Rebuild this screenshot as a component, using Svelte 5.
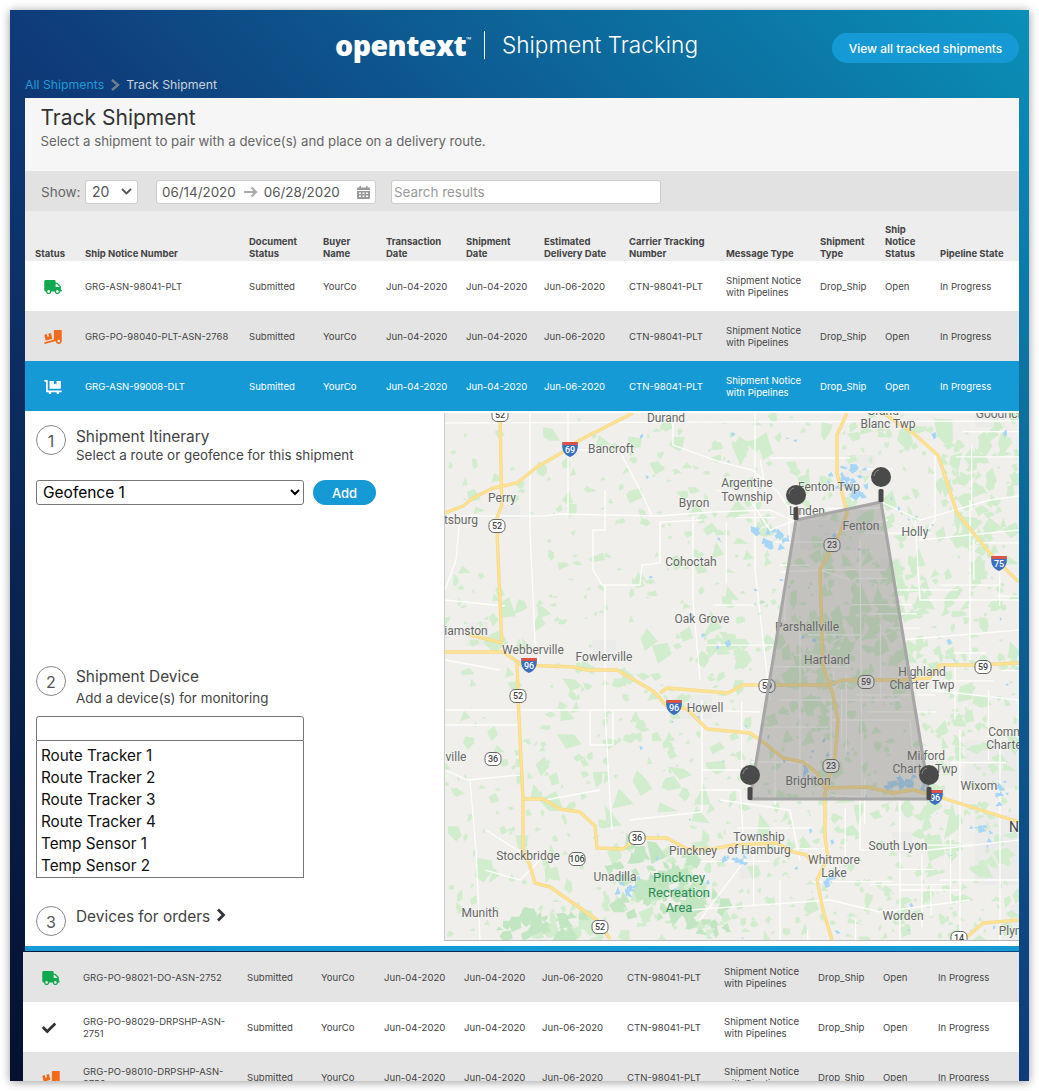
<script>
	const truck = 'M624 352h-16V243.9c0-12.7-5.1-24.9-14.1-33.9L494 110.1c-9-9-21.2-14.1-33.9-14.1H416V48c0-26.5-21.5-48-48-48H48C21.5 0 0 21.5 0 48v320c0 26.5 21.5 48 48 48h16c0 53 43 96 96 96s96-43 96-96h128c0 53 43 96 96 96s96-43 96-96h48c8.8 0 16-7.2 16-16v-32c0-8.8-7.2-16-16-16zM160 464c-26.5 0-48-21.5-48-48s21.5-48 48-48 48 21.5 48 48-21.5 48-48 48zm320 0c-26.5 0-48-21.5-48-48s21.5-48 48-48 48 21.5 48 48-21.5 48-48 48zm80-208H416V144h44.1l99.9 99.9V256z';
	const loading = 'M50.2 375.6c2.3 8.5 11.1 13.6 19.6 11.3l216.4-58c8.5-2.3 13.6-11.1 11.3-19.6l-49.7-185.5c-2.3-8.5-11.1-13.6-19.6-11.3L151 133.3l24.8 92.7-61.8 16.5-24.8-92.7-77.3 20.7C3.4 172.8-1.7 181.6.6 190.1l49.6 185.5zM384 0c-17.7 0-32 14.3-32 32v323.6L5.9 450c-4.3 1.2-6.8 5.6-5.6 9.8l12.6 46.3c1.2 4.3 5.6 6.8 9.8 5.6l393.7-107.4C418.8 464.1 467.6 512 528 512c61.9 0 112-50.1 112-112V0H384zm144 448c-26.5 0-48-21.5-48-48s21.5-48 48-48 48 21.5 48 48-21.5 48-48 48z';
	const dolly = 'M208 320h384c8.8 0 16-7.2 16-16V48c0-8.8-7.2-16-16-16H448v128l-48-32-48 32V32H208c-8.8 0-16 7.2-16 16v256c0 8.8 7.2 16 16 16zm416 64H128V16c0-8.8-7.2-16-16-16H16C7.2 0 0 7.2 0 16v32c0 8.8 7.2 16 16 16h48v368c0 8.8 7.2 16 16 16h82.9c-1.8 5-2.9 10.4-2.9 16 0 26.5 21.5 48 48 48s48-21.5 48-48c0-5.6-1.2-11-2.9-16H451c-1.8 5-2.9 10.4-2.9 16 0 26.5 21.5 48 48 48s48-21.5 48-48c0-5.6-1.2-11-2.9-16H624c8.8 0 16-7.2 16-16v-32c0-8.8-7.2-16-16-16z';
	const check = 'M173.898 439.404l-166.4-166.4c-9.997-9.997-9.997-26.206 0-36.204l36.203-36.204c9.997-9.998 26.207-9.998 36.204 0L192 312.69 432.095 72.596c9.997-9.997 26.207-9.997 36.204 0l36.203 36.204c9.997 9.997 9.997 26.206 0 36.204l-294.4 294.401c-9.998 9.997-26.207 9.997-36.204-.001z';

	const columns = [60, 164, 74, 63, 80, 78, 85, 97, 94, 65, 55, 79];
	const shiftedColumns = [60, 164, 74, 63, 80, 78, 85, 97, 94, 65, 55, 81];
	const headers = ['Status', 'Ship Notice Number', 'Document\nStatus', 'Buyer\nName', 'Transaction\nDate', 'Shipment\nDate', 'Estimated\nDelivery Date', 'Carrier Tracking\nNumber', 'Message Type', 'Shipment\nType', 'Ship\nNotice\nStatus', 'Pipeline State'];

	const topRows = [
		{ id: 'GRG-ASN-98041-PLT', icon: 'truck', tone: 'plain' },
		{ id: 'GRG-PO-98040-PLT-ASN-2768', icon: 'loading', tone: 'shade' },
		{ id: 'GRG-ASN-99008-DLT', icon: 'dolly', tone: 'selected' },
	];
	const bottomRows = [
		{ id: 'GRG-PO-98021-DO-ASN-2752', icon: 'truck', tone: 'shade' },
		{ id: 'GRG-PO-98029-DRPSHP-ASN-2751', icon: 'check', tone: 'plain' },
		{ id: 'GRG-PO-98010-DRPSHP-ASN-2750', icon: 'loading', tone: 'shade' },
	];
	const icons = {
		truck: { d: truck, box: '0 0 640 512', w: 18, cls: 'green' },
		loading: { d: loading, box: '0 0 640 512', w: 18, cls: 'orange' },
		dolly: { d: dolly, box: '0 0 640 512', w: 18, cls: 'white' },
		check: { d: check, box: '0 0 512 512', w: 14, cls: 'dark' },
	};

	const devices = ['Route Tracker 1', 'Route Tracker 2', 'Route Tracker 3', 'Route Tracker 4', 'Temp Sensor 1', 'Temp Sensor 2'];

	// map scenery, in page coordinates (the svg viewBox starts at 445,413)
	function seeded(seed) {
		return () => {
			seed = (seed + 0x6d2b79f5) | 0;
			let t = Math.imul(seed ^ (seed >>> 15), 1 | seed);
			t = (t + Math.imul(t ^ (t >>> 7), 61 | t)) ^ t;
			return ((t ^ (t >>> 14)) >>> 0) / 4294967296;
		};
	}
	const rnd = seeded(11);
	const blob = (cx, cy, r, n) => {
		const pts = [];
		const stretch = 0.5 + rnd();
		for (let i = 0; i < n; i++) {
			const a = (i / n) * Math.PI * 2 + rnd() * 0.7;
			const rr = r * (0.4 + rnd() * 0.8);
			pts.push(`${(cx + Math.cos(a) * rr).toFixed(1)},${(cy + Math.sin(a) * rr * stretch).toFixed(1)}`);
		}
		return pts.join(' ');
	};
	const scatter = (list, cx, cy, rx, ry, count, rmin, rmax) => {
		for (let i = 0; i < count; i++) {
			const x = cx + (rnd() - rnd()) * rx;
			const y = cy + (rnd() - rnd()) * ry;
			list.push(blob(x, y, rmin + rnd() * (rmax - rmin), 3 + Math.floor(rnd() * 3)));
		}
	};

	const greens = [];
	for (let i = 0; i < 2200; i++) {
		const x = 445 + rnd() * 574;
		const y = 413 + rnd() * 527;
		const weight = 0.16 + ((x - 445) / 574) * 0.62 + ((y - 413) / 527) * 0.22;
		if (rnd() > weight) continue;
		greens.push(blob(x, y, 2.5 + rnd() * rnd() * 12, 3 + Math.floor(rnd() * 3)));
	}
	scatter(greens, 980, 480, 40, 40, 30, 4, 10);
	scatter(greens, 910, 600, 70, 60, 50, 4, 11);
	scatter(greens, 830, 640, 50, 110, 70, 4, 11);

	const parks = [];
	scatter(parks, 655, 885, 50, 45, 70, 4, 11);
	scatter(parks, 545, 925, 50, 18, 26, 4, 10);
	scatter(parks, 700, 915, 40, 25, 20, 3, 8);
	scatter(parks, 760, 610, 10, 10, 3, 2, 4);

	const lakes = [];
	for (let i = 0; i < 80; i++) {
		lakes.push(blob(640 + rnd() * 379, 420 + rnd() * 520, 1 + rnd() * 2.5, 4));
	}
	scatter(lakes, 852, 482, 14, 20, 26, 2, 6);
	scatter(lakes, 772, 538, 20, 12, 14, 2, 6);
	scatter(lakes, 905, 783, 22, 9, 16, 2, 6);
	scatter(lakes, 805, 778, 10, 14, 8, 1.5, 4);
	scatter(lakes, 740, 858, 20, 10, 12, 2, 5);
	scatter(lakes, 628, 890, 16, 16, 10, 2, 5);
	scatter(lakes, 1000, 795, 16, 16, 8, 2, 5);
	scatter(lakes, 980, 830, 16, 14, 8, 2, 4);
	scatter(lakes, 830, 880, 8, 8, 5, 2, 5);

	const towns = [
		[845, 455, 30, 22], [800, 520, 60, 30], [672, 695, 40, 24], [500, 505, 20, 14], [466, 622, 22, 24],
		[592, 640, 24, 18], [880, 558, 22, 16], [965, 740, 54, 48], [975, 815, 44, 70], [740, 865, 20, 14],
		[892, 832, 20, 22], [1010, 905, 9, 32], [975, 415, 30, 12],
	];
	const white = [
		'445,423 1019,421',
		'445,516 545,516 560,514 660,516 712,512 770,510 800,524',
		'445,710 690,710 760,712',
		'445,725 520,725',
		'590,710 590,745 613,745 613,710',
		'530,413 530,530 535,640 540,668',
		'568,413 568,516',
		'605,490 605,530 593,530 593,570 602,585 640,585 642,565 660,563 660,522 702,520',
		'605,585 605,710 610,800 612,830',
		'445,600 505,606',
		'460,516 456,560 445,590',
		'445,770 468,780 520,775',
		'470,780 476,850 480,940',
		'486,830 520,852',
		'570,449 620,452 640,490 652,516',
		'630,820 702,812 702,770 740,770',
		'702,700 702,770',
		'673,423 673,445 720,462 752,470 778,492 796,520',
		'755,413 755,570 770,700',
		'693,516 693,600 700,680',
		'796,520 770,530 750,500 716,490',
		'881,502 920,520 990,500 1019,496',
		'770,458 850,458',
		'760,460 768,500',
		'935,455 935,520 920,540 1019,530',
		'915,520 920,600 1019,600',
		'970,500 970,660',
		'900,640 1019,630',
		'930,690 1019,700 1019,720',
		'960,730 960,940',
		'830,795 900,800 900,940',
		'860,800 860,850 930,850 1019,840',
		'940,880 1019,880',
		'900,890 960,890 960,900',
		'720,800 790,810 800,860',
		'700,790 740,790 745,860 700,920',
		'690,910 830,900 880,912 970,900',
		'780,880 780,940',
		'836,532 888,520',
		'780,572 820,570 850,580',
		'860,540 862,800',
		'800,620 800,780',
		'780,700 900,700',
		'830,720 910,720 915,780',
		'1000,740 1000,940',
		'445,660 500,670',
		'545,800 600,790',
		'485,870 520,880 540,860',
	];
	for (let i = 0; i < 60; i++) {
		const x = 700 + rnd() * 319;
		const y = 430 + rnd() * 500;
		const len = 25 + rnd() * 55;
		white.push(rnd() > 0.5 ? `${x},${y} ${x + len},${y}` : `${x},${y} ${x},${y + len}`);
	}
	const roads = [
		'500,413 501.7,505 497,518 497,532 501.7,640',
		'445,513 463,506 473,498 493,488 517,483 537,467 563,452 580,440 633,413',
		'445,652 503,652 522,665 573,667 587,670 617,670 653,691 667,706 687,709 707,729 750,733 767,745 783,758 803,762 817,773 825,788 867,787 893,793 913,790 933,795 1019,822',
		'847,413 837,435 837,473 847,513 840,533 820,570 823,667 832,690 838,720 835,757 825,793 825,837 828,857 817,880 823,910 832,940',
		'883,413 913,433 938,455 957,513 993,557 1019,582',
		'660,693 667,688 728,693 743,685 827,685 843,680 900,680 930,678 940,665 975,665 1019,663',
		'517,660 518,697 523,799 523,849 530,866 535,883 550,887 573,903 597,920 610,939',
		'470,635 503,643',
		'523,799 543,799 560,809 580,812 595,826 597,848 623,849 637,838 667,838 687,849 712,849 733,845 777,843 793,852 807,855 812,863',
		'967,937 983,923 1019,920',
	];
	const labels = [
		['Durand', 666, 418], ['Bancroft', 611, 449], ['Perry', 502, 498], ['tsburg', 461, 520], ['Byron', 694, 503],
		['Cohoctah', 691, 562], ['Oak Grove', 702, 619], ['iamston', 466, 631], ['Webberville', 533, 650], ['Fowlerville', 604, 657],
		['Howell', 705, 708], ['ville', 456, 757], ['Stockbridge', 528, 856], ['Unadilla', 615, 877], ['Pinckney', 693, 851], ['Munith', 480, 913],
		['Argentine', 747, 483], ['Township', 747, 497], ['Fenton Twp', 829, 487], ['Linden', 807, 511], ['Fenton', 861, 526], ['Holly', 915, 532],
		['Grand', 883, 411], ['Blanc Twp', 888, 424], ['Goodrich', 1000, 414], ['Parshallville', 807, 627], ['Hartland', 827, 660],
		['Highland', 922, 672], ['Charter Twp', 922, 685], ['Brighton', 808, 781], ['Milford', 926, 756], ['Charter Twp', 925, 769],
		['Wixom', 979, 786], ['Comm', 1006, 732], ['Charter', 1006, 745], ['Township', 759, 837], ['of Hamburg', 759, 850],
		['Whitmore', 834, 860], ['Lake', 834, 873], ['South Lyon', 898, 846], ['Worden', 903, 916], ['Plym', 1012, 931],
	];
	const shields = [
		['52', 500, 415], ['52', 497, 526], ['52', 518, 696], ['52', 600, 927], ['36', 493, 759], ['36', 637, 838], ['106', 577, 859],
		['23', 832, 545], ['23', 831, 766], ['59', 767, 686], ['59', 866, 682], ['59', 983, 667], ['14', 959, 938],
	];
	const interstates = [['69', 570, 449], ['96', 529, 665], ['96', 674, 707], ['75', 999, 563], ['96', 935, 797]];
	const pins = [[796, 495], [881, 477], [750, 775], [929, 775]];
</script>

{#snippet table(rows, cols)}
	<table class="grid">
		<colgroup>
			{#each cols as w}
				<col style="width: {w}px" />
			{/each}
		</colgroup>
		<tbody>
			{#each rows as row}
				<tr class={row.tone}>
					<td class="status">
						<svg class={icons[row.icon].cls} width={icons[row.icon].w} height="14" viewBox={icons[row.icon].box}><path d={icons[row.icon].d} /></svg>
					</td>
					<td class="ident">{row.id}</td>
					<td>Submitted</td>
					<td>YourCo</td>
					<td>Jun-04-2020</td>
					<td>Jun-04-2020</td>
					<td>Jun-06-2020</td>
					<td>CTN-98041-PLT</td>
					<td>Shipment Notice with Pipelines</td>
					<td>Drop_Ship</td>
					<td>Open</td>
					<td>In Progress</td>
				</tr>
			{/each}
		</tbody>
	</table>
{/snippet}

<div class="window">
	<header class="top">
		<div class="brand">
			<span class="logo">opentext<sup>™</sup></span>
			<span class="rule"></span>
			<span class="product">Shipment Tracking</span>
		</div>
		<button class="pill view-all">View all tracked shipments</button>
	</header>

	<nav class="crumbs">
		<a href="#all">All Shipments</a>
		<svg width="10" height="12" viewBox="0 0 10 12"><path d="M2 1l6 5-6 5" fill="none" stroke="#6f7f8f" stroke-width="2.4" /></svg>
		<span>Track Shipment</span>
	</nav>

	<main class="panel">
		<section class="intro">
			<h1>Track Shipment</h1>
			<p>Select a shipment to pair with a device(s) and place on a delivery route.</p>
		</section>

		<div class="filters">
			<span class="show">Show:</span>
			<div class="box count">
				<span>20</span>
				<svg width="11" height="7" viewBox="0 0 11 7"><path d="M1 1l4.5 4.5L10 1" fill="none" stroke="#555" stroke-width="1.8" /></svg>
			</div>
			<div class="box dates">
				<span>06/14/2020</span>
				<svg class="arrow" width="14" height="12" viewBox="0 0 14 12"><path d="M0 6h12M7.500 1.500L12 6l-4.500 4.500" fill="none" stroke="#aaa" stroke-width="2.2" /></svg>
				<span>06/28/2020</span>
				<svg class="cal" width="13" height="14" viewBox="0 0 13 14"><path d="M0 3.5a1 1 0 011-1h1.5V1h1.5v1.500h5V1h1.500v1.500H12a1 1 0 011 1V5H0zM0 6h13v7a1 1 0 01-1 1H1a1 1 0 01-1-1zm2 1.500v1.500h2V7.500zm3.500 0v1.500h2V7.500zm3.500 0v1.500h2V7.500zM2 10.500V12h2v-1.500zm3.500 0V12h2v-1.500zm3.500 0V12h2v-1.500z" fill="#999" fill-rule="evenodd" /></svg>
			</div>
			<input class="box search" placeholder="Search results" />
		</div>

		<table class="grid head">
			<colgroup>
				{#each columns as w}
					<col style="width: {w}px" />
				{/each}
			</colgroup>
			<thead>
				<tr>
					{#each headers as h}
						<th>{h}</th>
					{/each}
				</tr>
			</thead>
		</table>

		{@render table(topRows, columns)}

		<section class="detail">
			<div class="steps">
				<div class="step first">
					<span class="num">1</span>
					<div>
						<h2>Shipment Itinerary</h2>
						<p>Select a route or geofence for this shipment</p>
					</div>
				</div>
				<div class="route">
					<select>
						<option>Geofence 1</option>
						<option>Geofence 2</option>
					</select>
					<button class="pill add">Add</button>
				</div>

				<div class="step second">
					<span class="num">2</span>
					<div>
						<h2>Shipment Device</h2>
						<p>Add a device(s) for monitoring</p>
					</div>
				</div>
				<input class="device-input" />
				<ul class="device-list">
					{#each devices as d}
						<li>{d}</li>
					{/each}
				</ul>

				<div class="step third">
					<span class="num">3</span>
					<h2>Devices for orders
						<svg class="more" width="10" height="14" viewBox="0 0 10 14"><path d="M2 1.500L7.500 7 2 12.500" fill="none" stroke="#333" stroke-width="2.800" /></svg>
					</h2>
				</div>
			</div>

			<div class="map">
				<svg width="574" height="527" viewBox="445 413 574 527">
					<rect x="445" y="413" width="574" height="527" fill="#f0efeb" />
					{#each towns as t}
						<rect x={t[0]} y={t[1]} width={t[2]} height={t[3]} fill="#ebebe9" />
					{/each}
					{#each greens as p}
						<polygon points={p} fill="#d2edcd" />
					{/each}
					{#each parks as p}
						<polygon points={p} fill="#c3e6c2" />
					{/each}
					{#each white as p}
						<polyline points={p} fill="none" stroke="#fdfdfc" stroke-width="1.300" />
					{/each}
					{#each lakes as p}
						<polygon points={p} fill="#a8d6f6" />
					{/each}
					{#each roads as p}
						<polyline points={p} fill="none" stroke="#f8d98a" stroke-width="3.400" stroke-linejoin="round" />
						<polyline points={p} fill="none" stroke="#fde394" stroke-width="1.800" stroke-linejoin="round" />
					{/each}
					{#each labels as l}
						<text class="place" x={l[1]} y={l[2] + 4}>{l[0]}</text>
					{/each}
					<text class="park" x="679" y="882">Pinckney</text>
					<text class="park" x="679" y="897">Recreation</text>
					<text class="park" x="679" y="912">Area</text>
					<text class="place big" x="1014" y="832">N</text>
					{#each shields as s}
						<rect x={s[1] - 8} y={s[2] - 6.500} width="16" height="13" rx="5" fill="#fff" stroke="#666" stroke-width="1" />
						<text class="badge" x={s[1]} y={s[2] + 3.200}>{s[0]}</text>
					{/each}
					{#each interstates as s}
						<path d="M{s[1] - 7.500} {s[2] - 7}h15c1 6 0 12-7.500 15c-7.500-3-8.500-9-7.500-15z" fill="#3b6fc0" />
						<path d="M{s[1] - 7.500} {s[2] - 7}h15v3h-15z" fill="#d9534a" />
						<text class="badge inv" x={s[1]} y={s[2] + 4}>{s[0]}</text>
					{/each}
					<polygon points="796,520 881,502 930,799 750,799" fill="#6b6866" fill-opacity="0.33" stroke="#a6a6a6" stroke-width="3" stroke-linejoin="round" />
					{#each pins as p}
						<rect x={p[0] - 2.500} y={p[1] + 12} width="5" height="13" rx="1.500" fill="#4a4a4a" />
						<circle cx={p[0]} cy={p[1]} r="10" fill="#4a4a4a" />
						<path d="M{p[0] - 7} {p[1] - 1}a7 7 0 015-6" fill="none" stroke="#8c8c8c" stroke-width="1" />
					{/each}
				</svg>
			</div>
		</section>

		<div class="divider"></div>

		<div class="shifted">
			{@render table(bottomRows, shiftedColumns)}
		</div>
	</main>
</div>

<style>
	:global(body) {
		background: #fff;
		font-family: Inter, "Liberation Sans", sans-serif;
		color: #444;
		overflow: hidden;
	}

	.window {
		box-sizing: border-box;
		width: 1019px;
		height: 1071px;
		margin: 10px;
		overflow: hidden;
		background: linear-gradient(to top right, #05102f, #0f3b7a 50%, #0a90b8);
		box-shadow: 0 1px 9px rgba(0, 0, 0, 0.4);
	}

	.top {
		display: flex;
		align-items: flex-start;
		height: 63px;
		padding-right: 10px;
		padding-left: 325px;
	}

	.brand {
		display: flex;
		align-items: center;
		height: 28px;
		margin-top: 21px;
	}

	.logo {
		width: 138px;
		font-family: "Open Sans", sans-serif;
		font-weight: 800;
		font-size: 28.500px;
		letter-spacing: -0.5px;
		color: #fff;
		white-space: nowrap;
	}

	.logo sup {
		font-size: 7px;
		font-weight: 400;
		letter-spacing: 0;
		vertical-align: 14px;
		line-height: 0;
	}

	.rule {
		width: 1px;
		height: 28px;
		margin: 0 17px 0 11px;
		background: #fff;
	}

	.product {
		margin-top: -2px;
		font-weight: 300;
		font-size: 22.600px;
		color: #fff;
	}

	.pill {
		border: none;
		border-radius: 16px;
		background: #169ad6;
		color: #fff;
		font-family: inherit;
	}

	.view-all {
		width: 187px;
		height: 30px;
		margin-top: 23px;
		margin-left: auto;
		font-size: 12px;
		font-weight: 500;
	}

	.crumbs {
		display: flex;
		align-items: center;
		gap: 6px;
		height: 25px;
		padding-left: 15px;
		padding-bottom: 2px;
		box-sizing: border-box;
		font-size: 12.300px;
		color: #c9d2da;
	}

	.crumbs a {
		color: #1b9ad6;
		text-decoration: none;
	}

	.panel {
		width: 994px;
		margin-left: 15px;
	}

	.intro {
		box-sizing: border-box;
		height: 73px;
		padding: 7px 16px 0 15.500px;
		background: #f6f6f6;
	}

	h1 {
		margin: 0;
		font-size: 21px;
		line-height: 26px;
		font-weight: 400;
		color: #333;
	}

	.intro p {
		margin: 1px 0 0;
		font-size: 13.200px;
		line-height: 18px;
		color: #666;
	}

	.filters {
		display: flex;
		align-items: center;
		box-sizing: border-box;
		height: 40px;
		padding: 1px 0 0 16px;
		background: #e2e2e2;
	}

	.show {
		width: 44px;
		font-size: 13.500px;
		color: #666;
	}

	.box {
		box-sizing: border-box;
		height: 24px;
		background: #fff;
		border: 1px solid #ccc;
		border-radius: 3px;
		font-family: inherit;
		font-size: 13.400px;
		color: #555;
	}

	.count {
		display: flex;
		align-items: center;
		justify-content: space-between;
		width: 53px;
		padding: 0 5px 0 6px;
		font-size: 14px;
	}

	.dates {
		display: flex;
		align-items: center;
		width: 220px;
		margin-left: 18px;
		padding: 0 5px;
	}

	.arrow {
		margin: 0 6px 0 8px;
	}

	.cal {
		margin-left: auto;
	}

	.search {
		width: 270px;
		margin-left: 15px;
		padding: 0 2px;
		outline: none;
	}

	.search::placeholder {
		color: #999;
	}

	.grid {
		width: 100%;
		table-layout: fixed;
		border-collapse: collapse;
		font-size: 9.600px;
		line-height: 12px;
	}

	.head {
		background: #ededed;
	}

	.head th {
		height: 50px;
		padding: 0 0 1px;
		box-sizing: border-box;
		vertical-align: bottom;
		text-align: left;
		font-size: 9.500px;
		font-weight: 700;
		color: #444;
		white-space: pre-line;
	}

	.head th:first-child {
		padding-left: 10px;
	}

	.grid td {
		height: 50px;
		padding: 2px 8px 0 0;
		box-sizing: border-box;
		vertical-align: middle;
		color: #444;
	}

	.grid td.status {
		padding: 2px 0 0 19px;
		line-height: 0;
	}

	.grid td.ident {
		padding-right: 16px;
		font-size: 9.500px;
		overflow-wrap: break-word;
	}

	.plain {
		background: #fff;
	}

	.shade {
		background: #e4e4e4;
	}

	.selected {
		background: #169ad6;
	}

	.selected td {
		color: #fff;
	}

	.green {
		fill: #12a84f;
	}

	.orange {
		fill: #f26a1b;
	}

	.white {
		fill: #fff;
	}

	.dark {
		fill: #333;
	}

	.detail {
		display: grid;
		grid-template-columns: 420px 574px;
		height: 535px;
		background: #fff;
	}

	.steps {
		padding-left: 11px;
	}

	.step {
		display: flex;
		gap: 10px;
	}

	.step.first {
		padding-top: 14px;
	}

	.step.first h2 {
		margin-top: 1px;
	}

	.step.first p {
		margin-top: -1px;
	}

	.step.second {
		padding-top: 161px;
	}

	.step.third {
		padding-top: 28px;
	}

	.num {
		flex: none;
		box-sizing: border-box;
		width: 30px;
		height: 30px;
		border: 1px solid #888;
		border-radius: 50%;
		text-align: center;
		font-size: 16px;
		line-height: 30px;
		color: #555;
	}

	h2 {
		margin: 0;
		font-size: 15.400px;
		line-height: 22px;
		font-weight: 400;
		color: #444;
	}

	.more {
		margin-left: 2px;
	}

	.step p {
		margin: 0;
		font-size: 13.400px;
		line-height: 17px;
		color: #444;
	}

	.step.second p {
		margin-top: 2px;
	}

	.route {
		display: flex;
		gap: 9px;
		margin-top: 16px;
	}

	.route select {
		box-sizing: border-box;
		width: 268px;
		height: 25px;
		padding-left: 2px;
		border: 1px solid #767676;
		border-radius: 3px;
		background: #fff;
		font-family: inherit;
		font-size: 15.500px;
		color: #000;
	}

	.add {
		width: 63px;
		height: 25px;
		font-size: 13px;
		font-weight: 500;
	}

	.device-input {
		display: block;
		box-sizing: border-box;
		width: 268px;
		height: 25px;
		margin-top: 9px;
		border: 1px solid #767676;
		border-radius: 3px 3px 0 0;
		outline: none;
	}

	.device-list {
		box-sizing: border-box;
		width: 268px;
		height: 137px;
		margin: 0;
		padding: 4px 0 0 4px;
		border: 1px solid #767676;
		border-top: none;
		list-style: none;
		font-size: 15.300px;
		line-height: 22px;
		color: #111;
	}

	.map {
		height: 527px;
		margin-top: 2px;
		border-bottom: 1px solid #bbb;
		border-left: 1px solid #ccc;
		margin-left: -1px;
		line-height: 0;
	}

	.map svg {
		display: block;
	}

	.place {
		font-family: Roboto, sans-serif;
		font-size: 12px;
		fill: #666;
		text-anchor: middle;
		paint-order: stroke;
		stroke: rgba(255, 255, 255, 0.45);
		stroke-width: 1.500px;
	}

	.big {
		font-size: 14px;
		fill: #444;
	}

	.park {
		font-family: Roboto, sans-serif;
		font-size: 13px;
		fill: #2e8b57;
		text-anchor: middle;
	}

	.badge {
		font-family: Roboto, sans-serif;
		font-size: 9px;
		font-weight: 500;
		fill: #444;
		text-anchor: middle;
	}

	.inv {
		fill: #fff;
	}

	.divider {
		height: 5px;
		background: #169ad6;
	}

	.shifted {
		width: 996px;
		margin: 1px 0 0 -2px;
	}
</style>
